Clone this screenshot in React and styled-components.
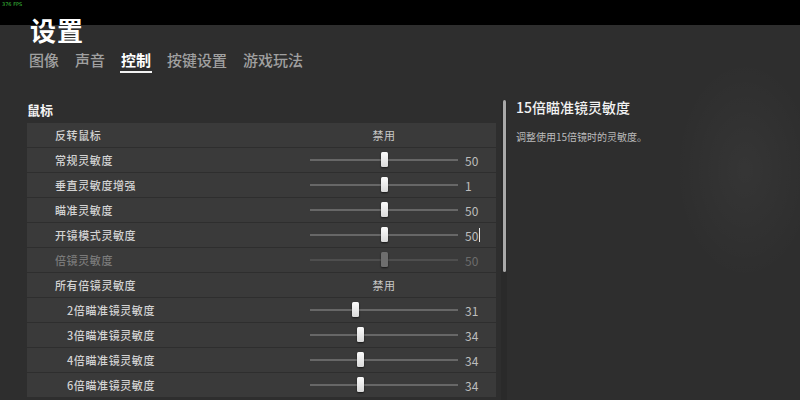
import React from 'react';
import styled, { createGlobalStyle } from 'styled-components';

const GlobalStyle = createGlobalStyle`
  html, body {
    margin: 0;
    padding: 0;
  }
  body {
    width: 800px;
    height: 400px;
    overflow: hidden;
    background: linear-gradient(#000 0 25px, #2e2e2e 25px);
    font-family: "Noto Sans CJK SC", "Noto Sans", sans-serif;
    color: #fff;
  }
`;

const Page = styled.div`
  position: relative;
  width: 800px;
  height: 400px;
  overflow: hidden;
  padding-left: 28px;
  box-sizing: border-box;
  background: radial-gradient(ellipse 70px 110px at 745px 170px, rgba(255,255,255,0.035), transparent);
`;

const Fps = styled.div`
  position: absolute;
  left: 2px;
  top: 1px;
  font-family: "DejaVu Sans", sans-serif;
  font-size: 5px;
  line-height: 7px;
  color: #3ec23e;
`;

const Title = styled.h1`
  margin: 0;
  padding-top: 15px;
  padding-left: 2px;
  font-size: 26px;
  line-height: 30px;
  font-weight: 700;
  letter-spacing: 1px;
`;

const Tabs = styled.nav`
  display: flex;
  gap: 16px;
  margin-top: 5px;
  padding-left: 1px;
`;

const Tab = styled.div`
  font-size: 15px;
  line-height: 20px;
  font-weight: ${p => (p.active ? 700 : 500)};
  color: ${p => (p.active ? '#ffffff' : '#a0a0a0')};
  padding: 0 1px 1px;
  margin: 0 -1px;
  border-bottom: 2px solid ${p => (p.active ? '#f2f2f2' : 'transparent')};
`;

const Main = styled.div`
  display: flex;
  margin-top: 27px;
`;

const LeftPanel = styled.section`
  width: 468px;
`;

const SectionTitle = styled.div`
  font-size: 13px;
  line-height: 20px;
  font-weight: 700;
  color: #f4f4f4;
  margin-left: -1px;
`;

const List = styled.div`
  display: flex;
  flex-direction: column;
  gap: 1px;
  margin-top: 3px;
  margin-left: -1px;
`;

const Row = styled.div`
  display: grid;
  align-items: center;
  height: 24px;
  padding-left: ${p => (p.indent ? 40 : 28)}px;
  grid-template-columns: ${p => (p.indent ? 243 : 255)}px 148px 1fr;
  background: #3a3a3a;
  font-size: 11px;
  letter-spacing: 0.6px;
`;

const Label = styled.span`
  font-weight: 500;
  color: ${p => (p.disabled ? '#7a7a7a' : '#d2d2d2')};
`;

const Toggle = styled.span`
  text-align: center;
  color: #c8c8c8;
`;

const Track = styled.div`
  position: relative;
  height: 2px;
  background: ${p => (p.disabled ? '#4e4e4e' : '#676767')};
`;

const Thumb = styled.div`
  position: absolute;
  top: -7px;
  width: 7px;
  height: 15px;
  margin-left: -3.5px;
  border-radius: 1.5px;
  background: ${p =>
    p.disabled ? '#6e6e6e' : 'linear-gradient(#fbfbfb, #d9d9d9)'};
  box-shadow: 0 1px 2px rgba(0, 0, 0, 0.6);
`;

const Value = styled.span`
  padding-left: 7px;
  font-size: 12px;
  letter-spacing: 0;
  color: ${p => (p.disabled ? '#6c6c6c' : '#bdbdbd')};
  display: flex;
  align-items: center;
`;

const Caret = styled.span`
  display: inline-block;
  width: 1px;
  height: 14px;
  margin-left: 1px;
  background: #e8e8e8;
`;

const ScrollTrack = styled.div`
  width: 6px;
  height: 300px;
  margin-left: 5px;
  background: #2a2a2a;
  display: flex;
  justify-content: center;
`;

const ScrollThumb = styled.div`
  width: 3px;
  height: 172px;
  border-radius: 1.5px;
  background: #a9a9a9;
`;

const RightPanel = styled.aside`
  padding-left: 9px;
`;

const InfoTitle = styled.div`
  font-size: 14px;
  line-height: 14px;
  font-weight: 500;
  color: #f2f2f2;
`;

const InfoText = styled.div`
  margin-top: 16px;
  font-size: 10px;
  line-height: 14px;
  color: #bcbcbc;
`;

const rows = [
  { label: '反转鼠标', toggle: '禁用' },
  { label: '常规灵敏度', value: 50 },
  { label: '垂直灵敏度增强', value: 1, pos: 50 },
  { label: '瞄准灵敏度', value: 50 },
  { label: '开镜模式灵敏度', value: 50, caret: true },
  { label: '倍镜灵敏度', value: 50, disabled: true },
  { label: '所有倍镜灵敏度', toggle: '禁用' },
  { label: '2倍瞄准镜灵敏度', value: 31, indent: true },
  { label: '3倍瞄准镜灵敏度', value: 34, indent: true },
  { label: '4倍瞄准镜灵敏度', value: 34, indent: true },
  { label: '6倍瞄准镜灵敏度', value: 34, indent: true },
];

function SettingRow({ row }) {
  const pos = row.pos !== undefined ? row.pos : row.value;
  return (
    <Row indent={row.indent}>
      <Label disabled={row.disabled}>{row.label}</Label>
      {row.toggle ? (
        <Toggle>{row.toggle}</Toggle>
      ) : (
        <>
          <Track disabled={row.disabled}>
            <Thumb disabled={row.disabled} style={{ left: `${pos}%` }} />
          </Track>
          <Value disabled={row.disabled}>
            {row.value}
            {row.caret && <Caret />}
          </Value>
        </>
      )}
    </Row>
  );
}

export default function App() {
  return (
    <>
      <GlobalStyle />
      <Page>
        <Fps>376 FPS</Fps>
        <Title>设置</Title>
        <Tabs>
          <Tab>图像</Tab>
          <Tab>声音</Tab>
          <Tab active>控制</Tab>
          <Tab>按键设置</Tab>
          <Tab>游戏玩法</Tab>
        </Tabs>
        <Main>
          <LeftPanel>
            <SectionTitle>鼠标</SectionTitle>
            <List>
              {rows.map((row, i) => (
                <SettingRow key={i} row={row} />
              ))}
            </List>
          </LeftPanel>
          <ScrollTrack>
            <ScrollThumb />
          </ScrollTrack>
          <RightPanel>
            <InfoTitle>15倍瞄准镜灵敏度</InfoTitle>
            <InfoText>调整使用15倍镜时的灵敏度。</InfoText>
          </RightPanel>
        </Main>
      </Page>
    </>
  );
}
